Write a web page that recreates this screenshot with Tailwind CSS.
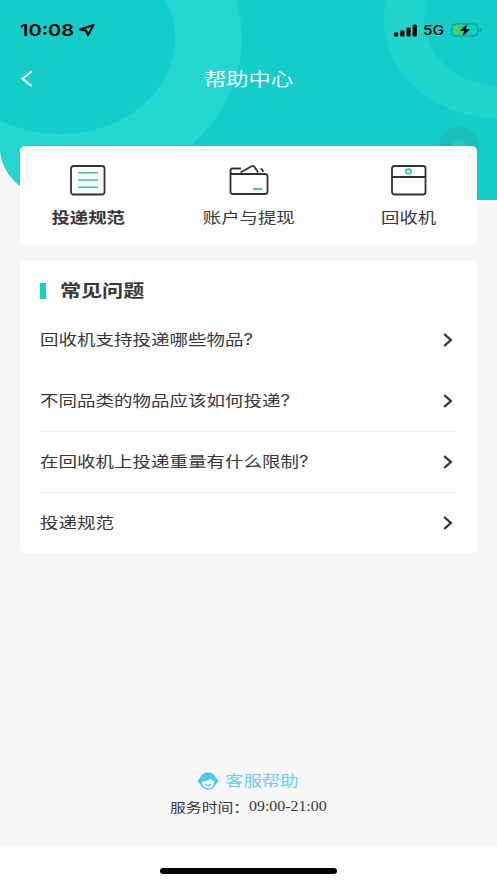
<!DOCTYPE html>
<html lang="zh-CN">
<head>
<meta charset="utf-8">
<title>帮助中心</title>
<script src="https://cdn.jsdelivr.net/npm/@tailwindcss/browser@4"></script>
</head>
<body class="w-[497px] h-[883px] overflow-hidden bg-[#f7f7f7] font-['Inter','Noto_Sans_CJK_SC',sans-serif] text-[#383838]">
<div class="relative isolate flex h-[883px] flex-col overflow-hidden">
  <svg class="absolute left-0 top-0 -z-10" width="497" height="200" viewBox="0 0 497 200">
    <defs><clipPath id="hero"><path d="M0 0H497V200H62A62 53 0 0 1 0 147Z"/></clipPath></defs>
    <g clip-path="url(#hero)">
      <rect width="497" height="200" fill="#13cdc8"/>
      <ellipse cx="58" cy="38" rx="184" ry="156" fill="#23d6d0"/>
      <ellipse cx="60" cy="38" rx="115" ry="96" fill="#13cdc8"/>
      <ellipse cx="501" cy="20" rx="117" ry="99" fill="#20d4ce"/>
      <ellipse cx="501" cy="20" rx="77" ry="66" fill="#13cdc8"/>
      <ellipse cx="459" cy="147" rx="20" ry="20" fill="#16bfba"/>
      <ellipse cx="459" cy="145" rx="7" ry="6" fill="#20c9c4"/>
    </g>
  </svg>

  <header class="flex h-[60px] items-center justify-between pl-[20px] pr-[15px] text-black">
    <div class="flex items-center">
      <span class="w-[54px] whitespace-nowrap text-[16px] font-semibold leading-none"><span class="inline-block origin-left scale-x-[1.25]">10:08</span></span>
      <svg class="ml-[4px]" width="18" height="15" viewBox="0 0 18 15" fill="none" stroke="black" stroke-width="2" stroke-linejoin="round"><path d="M15.500 2L2 6.500L8.200 7.500L9.800 12.500Z"/></svg>
    </div>
    <div class="flex items-center">
      <svg width="24" height="13" viewBox="0 0 24 13"><rect x="0" y="8.5" width="4.2" height="4" rx="1"/><rect x="6.2" y="6.5" width="4.2" height="6" rx="1"/><rect x="12.4" y="3.5" width="4.2" height="9" rx="1"/><rect x="18.6" y=".5" width="4.2" height="12" rx="1"/></svg>
      <span class="ml-[5px] w-[28px] whitespace-nowrap text-[13px] font-medium leading-none"><span class="inline-block origin-left scale-x-[1.19]">5G</span></span>
      <svg width="31" height="14" viewBox="0 0 31 14"><rect x=".7" y="1" width="26" height="12" rx="3.5" fill="none" stroke="#168e8c" stroke-width="1"/><path d="M4.500 2.500H14V11.500H4.500Q2.500 11.500 2.500 9.500V4.500Q2.500 2.500 4.500 2.500Z" fill="#3fd65b"/><path d="M28.700 5V9Q30.500 8.500 30.500 7T28.700 5Z" fill="#168e8c"/><path d="M16.500 .5L8.500 8H13L11.500 13.500L19.500 6H15Z" fill="black" stroke="#13cdc8" stroke-width=".4"/></svg>
    </div>
  </header>

  <nav class="grid h-[38px] grid-cols-[60px_1fr_60px] items-center text-white">
    <svg class="ml-[20px]" width="14" height="18" viewBox="0 0 14 18" fill="none" stroke="white" stroke-width="1.9"><path d="M11.500 1.500L2.500 8.800L11.500 16"/></svg>
    <h1 class="text-center text-[18.3px] font-normal leading-none"><span class="inline-block scale-x-[1.218]">帮助中心</span></h1>
  </nav>

  <section class="mx-[20px] mt-[48px] flex h-[100px] justify-between rounded-[5px] bg-white px-[18px] pt-[19px]">
    <div class="flex w-[100px] flex-col items-center gap-[14px]">
      <svg width="36" height="31" viewBox="0 0 36 31" fill="none"><rect x="1" y="1" width="33.500" height="28.500" rx="2.500" stroke="#333" stroke-width="1.8"/><path d="M8 7.800H28M8 15H28M8 22.200H28" stroke="#38beb9" stroke-width="1.600"/></svg>
      <span class="text-[15.1px] font-bold leading-none text-[#383838]"><span class="inline-block scale-x-[1.218]">投递规范</span></span>
    </div>
    <div class="flex w-[100px] flex-col items-center gap-[14px]">
      <svg width="40" height="31" viewBox="0 0 40 31" fill="none" stroke="#333" stroke-width="1.800"><path d="M12 3.500H3.500Q1.500 3.500 1.500 6V26.500Q1.500 29 4 29H36Q38.500 29 38.500 26.500V11.500Q38.500 9 36 9H3.500Q1.500 9 1.500 6.500M11.500 7.500L22.500 1.200Q24.300 .4 25.500 2L29.200 7.500M31.500 3.500Q34 4.500 34 7"/><path d="M24 24H33" stroke="#28bbc0"/></svg>
      <span class="whitespace-nowrap text-[15.1px] leading-none"><span class="inline-block scale-x-[1.218]">账户与提现</span></span>
    </div>
    <div class="flex w-[100px] flex-col items-center gap-[14px]">
      <svg width="36" height="31" viewBox="0 0 36 31" fill="none" stroke="#333" stroke-width="1.800"><rect x="1" y="1" width="33.500" height="28.500" rx="2.500"/><path d="M1 12H34.500"/><ellipse cx="17.500" cy="6.400" rx="2.800" ry="2.300" stroke="#38beb9" stroke-width="1.600"/></svg>
      <span class="text-[15.1px] leading-none"><span class="inline-block scale-x-[1.218]">回收机</span></span>
    </div>
  </section>

  <main class="mx-[20px] mt-[15px] h-[292px] rounded-[5px] bg-white px-[20px]">
    <div class="flex h-[48px] items-center pt-[11px]">
      <i class="block h-[16px] w-[6px] bg-[#16cfc8]"></i>
      <h2 class="ml-[14px] text-[17.3px] font-bold leading-none text-[#383838]"><span class="inline-block origin-left scale-x-[1.218]">常见问题</span></h2>
    </div>
    <ul class="text-[15.2px] leading-none">
      <li class="flex h-[61px] items-center justify-between pr-[4px]"><span class="inline-block origin-left scale-x-[1.218]">回收机支持投递哪些物品?</span><svg width="10" height="14" viewBox="0 0 10 14" fill="none" stroke="#333" stroke-width="2.300"><path d="M1.200 1L7.800 7L1.200 13"/></svg></li>
      <li class="flex h-[62px] items-center justify-between border-b border-[#eeeeee] pr-[4px]"><span class="inline-block origin-left scale-x-[1.218]">不同品类的物品应该如何投递?</span><svg width="10" height="14" viewBox="0 0 10 14" fill="none" stroke="#333" stroke-width="2.300"><path d="M1.200 1L7.800 7L1.200 13"/></svg></li>
      <li class="flex h-[61px] items-center justify-between border-b border-[#eeeeee] pr-[4px]"><span class="inline-block origin-left scale-x-[1.218]">在回收机上投递重量有什么限制?</span><svg width="10" height="14" viewBox="0 0 10 14" fill="none" stroke="#333" stroke-width="2.300"><path d="M1.200 1L7.800 7L1.200 13"/></svg></li>
      <li class="flex h-[60px] items-center justify-between pr-[4px]"><span class="inline-block origin-left scale-x-[1.218]">投递规范</span><svg width="10" height="14" viewBox="0 0 10 14" fill="none" stroke="#333" stroke-width="2.300"><path d="M1.200 1L7.800 7L1.200 13"/></svg></li>
    </ul>
  </main>

  <footer class="mt-auto flex flex-col">
    <div class="flex items-center pl-[197px] text-[#66d3f0]">
      <svg width="22" height="18" viewBox="0 0 22 18"><path d="M3.500 5C6-1.500 16-1.500 18.500 5L21.700 9L18.500 12.500Q16.500 17.500 11 17.500T3.500 12.500L.3 9Z" fill="#48c9ee"/><path d="M4.800 9.500Q10.500 9.500 13.500 6.500Q14.500 9 17.200 9.200Q17.500 16.300 11 16.300Q5 16.300 4.800 9.500Z" fill="#f4fafb"/><path d="M8 12.500Q11 14.500 14 12.200" fill="none" stroke="#48c9ee" stroke-width="1.100"/></svg>
      <span class="ml-[6px] text-[15.1px] leading-none"><span class="inline-block origin-left scale-x-[1.218]">客服帮助</span></span>
    </div>
    <p class="mt-[10px] flex h-[14px] items-center pl-[170px] text-[13px] leading-none"><span class="w-[79px] whitespace-nowrap"><span class="inline-block origin-left scale-x-[1.218]">服务时间：</span></span><span class="inline-block origin-left scale-x-[1.16] font-['Liberation_Serif',serif] text-[13.7px]">09:00-21:00</span></p>
    <div class="mt-[32px] flex h-[37px] justify-center bg-white pt-[22px]"><i class="block h-[6px] w-[177px] rounded-full bg-black"></i></div>
  </footer>
</div>
</body>
</html>
